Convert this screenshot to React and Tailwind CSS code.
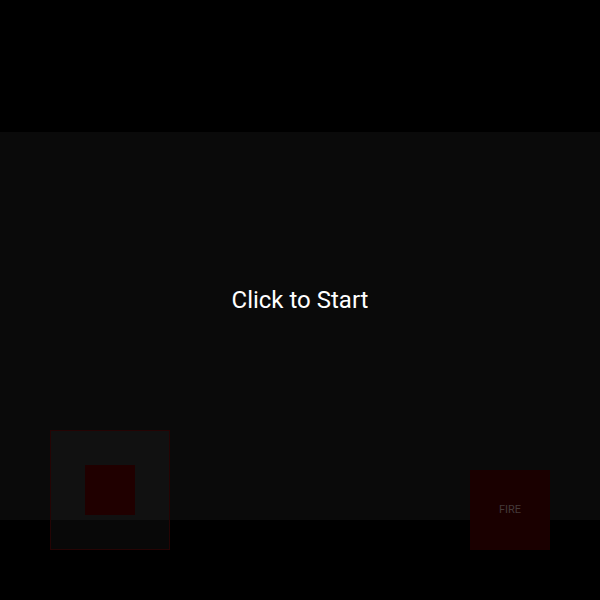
import React from 'react';

const App = () => {
  return (
    <div className="relative w-[600px] h-[600px] bg-black overflow-hidden select-none" style={{ fontFamily: 'Roboto, "Liberation Sans", sans-serif' }}>
      {/* game area */}
      <div className="flex flex-col h-full">
        <div className="h-[132px]" />
        <div className="h-[388px] bg-[#0a0a0a]" />
        <div className="flex-1" />
      </div>

      {/* start overlay */}
      <div className="absolute inset-0 flex items-center justify-center">
        <span className="text-white text-[24px] leading-none">Click to Start</span>
      </div>

      {/* joystick */}
      <div className="absolute left-[50px] top-[430px] w-[120px] h-[120px] border border-[#250404] bg-white/[0.03] flex items-center justify-center">
        <div className="w-[50px] h-[50px] bg-[#200000]" />
      </div>

      {/* fire button */}
      <div className="absolute left-[470px] top-[470px] w-[80px] h-[80px] bg-[#1a0000] flex items-center justify-center">
        <span className="text-[11px] text-[#443a3a]">FIRE</span>
      </div>
    </div>
  );
};

export default App;
